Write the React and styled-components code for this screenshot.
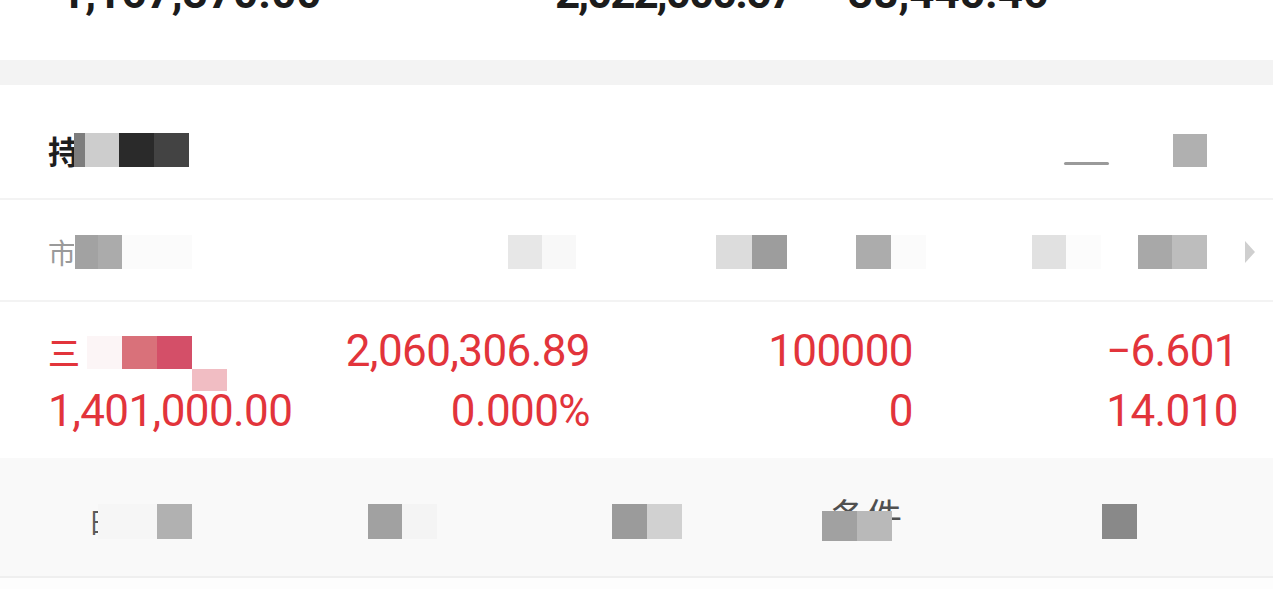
import React from 'react';
import styled, { createGlobalStyle } from 'styled-components';

const Global = createGlobalStyle`
  html, body { margin: 0; padding: 0; background: #fff; overflow: hidden; }
  body { font-family: Roboto, "Noto Sans CJK SC", sans-serif; }
`;

const Page = styled.div`
  width: 1273px;
  height: 589px;
  overflow: hidden;
  background: #fff;
  display: flex;
  flex-direction: column;
`;

const TopStrip = styled.div`
  flex: none;
  height: 60px;
  overflow: hidden;
  box-sizing: border-box;
  padding-left: 60px;
  display: grid;
  grid-template-columns: 495px 293px 1fr;
  align-items: start;
`;

const TopNumber = styled.div`
  font-family: Roboto, sans-serif;
  font-weight: 700;
  font-size: 44px;
  line-height: 44px;
  margin-top: -29px;
  letter-spacing: ${(p) => p.$ls || 0}px;
  color: #1c1c1c;
`;

const Band = styled.div`
  flex: none;
  height: 25px;
  background: #f3f3f3;
`;

const Header = styled.div`
  flex: none;
  height: 115px;
  box-sizing: border-box;
  padding: 17px 66px 0 48px;
  display: flex;
  align-items: center;
  justify-content: space-between;
  border-bottom: 2px solid #f3f3f3;
`;

const Title = styled.div`
  display: flex;
  align-items: center;
`;

const TitleGlyph = styled.span`
  font-family: "Noto Sans CJK SC", sans-serif;
  font-weight: 700;
  font-size: 32px;
  line-height: 40px;
  color: #1e1e1e;
`;

const HeaderTools = styled.div`
  display: flex;
  align-items: center;
  gap: 64px;
`;

const Dash = styled.span`
  display: block;
  width: 45px;
  height: 3px;
  margin-top: 26px;
  background: #9a9a9a;
  border-radius: 2px;
`;

const TileRow = styled.span`
  display: inline-flex;
  flex: none;
  margin-left: ${(p) => p.$ml || 0}px;
`;

const Tile = styled.span`
  display: block;
  flex: none;
  width: ${(p) => p.$w || 35}px;
  height: ${(p) => p.$h || 34}px;
  background: ${(p) => p.$c};
`;

const ColumnHeader = styled.div`
  flex: none;
  height: 102px;
  box-sizing: border-box;
  padding: 4px 18px 0 48px;
  display: grid;
  grid-template-columns: 460px 208px 140px 176px 106px 1fr;
  align-items: center;
  border-bottom: 2px solid #f3f3f3;
`;

const HeadCell = styled.div`
  display: flex;
  align-items: center;
  justify-content: ${(p) => (p.$spread ? 'space-between' : 'flex-start')};
`;

const HeadGlyph = styled.span`
  font-family: "Noto Sans CJK SC", sans-serif;
  font-size: 28px;
  line-height: 34px;
  color: #9a9a9a;
  width: 26px;
  overflow: hidden;
`;

const Arrow = styled.svg`
  width: 10px;
  height: 22px;
  display: block;
`;

const DataBlock = styled.div`
  flex: none;
  height: 156px;
  box-sizing: border-box;
  padding: 19px 35px 0 48px;
  display: grid;
  grid-template-columns: 252px 290px 323px 1fr;
  grid-auto-rows: 60px;
  color: #e2343b;
`;

const Num = styled.div`
  font-family: Roboto, sans-serif;
  font-size: 44px;
  line-height: 60px;
  letter-spacing: -0.6px;
  text-align: ${(p) => p.$align || 'right'};
  white-space: nowrap;
`;

const NameCell = styled.div`
  display: flex;
  align-items: center;
`;

const NameGlyph = styled.span`
  font-family: "Noto Sans CJK SC", sans-serif;
  font-size: 32px;
  font-weight: 500;
  line-height: 40px;
  color: #e2343b;
`;

const TileGrid = styled.span`
  display: grid;
  grid-template-columns: repeat(4, 35px);
  grid-template-rows: 33px 22px;
  margin: 4px 0 -20px 7px;
`;

const GridTile = styled.span`
  background: ${(p) => p.$c || 'transparent'};
`;

const Toolbar = styled.div`
  flex: none;
  height: 120px;
  box-sizing: border-box;
  padding: 8px 0 0 88px;
  background: #f9f9f9;
  border-bottom: 2px solid #efefef;
  display: grid;
  grid-template-columns: 280px 244px 210px 280px 1fr;
  align-items: center;
`;

const ToolItem = styled.div`
  display: flex;
  align-items: center;
  position: relative;
`;

const ClipGlyph = styled.span`
  display: block;
  width: 10px;
  overflow: hidden;
  font-family: "Noto Sans CJK SC", sans-serif;
  font-size: 28px;
  line-height: 34px;
  color: #5a5a5a;
`;

const ToolText = styled.span`
  font-family: "Noto Sans CJK SC", sans-serif;
  font-size: 36px;
  line-height: 40px;
  color: #505050;
  margin-left: 8px;
  margin-top: -14px;
`;

const Cover = styled.span`
  position: absolute;
  left: 0;
  top: 3px;
  display: flex;
`;

const Foot = styled.div`
  flex: 1;
  background: #fdfdfd;
`;

const Tiles = ({ items, h, ml }) => (
  <TileRow $ml={ml}>
    {items.map(([c, w], i) => (
      <Tile key={i} $c={c} $w={w} $h={h} />
    ))}
  </TileRow>
);

export default function App() {
  return (
    <Page>
      <Global />
      <TopStrip>
        <TopNumber>1,167,370.00</TopNumber>
        <TopNumber $ls={-2}>2,022,000.57</TopNumber>
        <TopNumber>38,445.46</TopNumber>
      </TopStrip>
      <Band />
      <Header>
        <Title>
          <TitleGlyph>持</TitleGlyph>
          <Tiles ml={-6} items={[['#7d7d7d', 11], ['#cdcdcd', 34], ['#2a2a2a', 35], ['#434343', 35]]} />
        </Title>
        <HeaderTools>
          <Dash />
          <Tiles h={33} items={[['#b0b0b0', 34]]} />
        </HeaderTools>
      </Header>
      <ColumnHeader>
        <HeadCell>
          <HeadGlyph>市</HeadGlyph>
          <Tiles ml={1} items={[['#a2a2a2', 23], ['#ababab', 24], ['#fbfbfb', 70]]} />
        </HeadCell>
        <HeadCell>
          <Tiles items={[['#e7e7e7', 34], ['#f8f8f8', 34]]} />
        </HeadCell>
        <HeadCell>
          <Tiles items={[['#dcdcdc', 36], ['#9d9d9d', 35]]} />
        </HeadCell>
        <HeadCell>
          <Tiles items={[['#acacac', 35], ['#fbfbfb', 35]]} />
        </HeadCell>
        <HeadCell>
          <Tiles items={[['#e1e1e1', 34], ['#fcfcfc', 35]]} />
        </HeadCell>
        <HeadCell $spread>
          <Tiles items={[['#a8a8a8', 34], ['#bdbdbd', 35]]} />
          <Arrow viewBox="0 0 10 22">
            <polygon points="0,0 10,11 0,22" fill="#cfcfcf" />
          </Arrow>
        </HeadCell>
      </ColumnHeader>
      <DataBlock>
        <NameCell>
          <NameGlyph>三</NameGlyph>
          <TileGrid>
            <GridTile $c="#fcf5f6" />
            <GridTile $c="#d9717a" />
            <GridTile $c="#d44f68" />
            <GridTile />
            <GridTile />
            <GridTile />
            <GridTile />
            <GridTile $c="#f1bdc3" />
          </TileGrid>
        </NameCell>
        <Num>2,060,306.89</Num>
        <Num>100000</Num>
        <Num>−6.601</Num>
        <Num $align="left">1,401,000.00</Num>
        <Num>0.000%</Num>
        <Num>0</Num>
        <Num>14.010</Num>
      </DataBlock>
      <Toolbar>
        <ToolItem>
          <ClipGlyph>日</ClipGlyph>
          <Tiles h={35} items={[['#f6f6f6', 59], ['#b1b1b1', 35]]} />
        </ToolItem>
        <ToolItem>
          <Tiles h={35} items={[['#a1a1a1', 34], ['#f4f4f4', 35]]} />
        </ToolItem>
        <ToolItem>
          <Tiles h={35} items={[['#9b9b9b', 35], ['#d1d1d1', 35]]} />
        </ToolItem>
        <ToolItem>
          <ToolText>条件</ToolText>
          <Cover>
            <Tiles h={30} items={[['#a1a1a1', 35], ['#b9b9b9', 35]]} />
          </Cover>
        </ToolItem>
        <ToolItem>
          <Tiles h={35} items={[['#898989', 35]]} />
        </ToolItem>
      </Toolbar>
      <Foot />
    </Page>
  );
}
